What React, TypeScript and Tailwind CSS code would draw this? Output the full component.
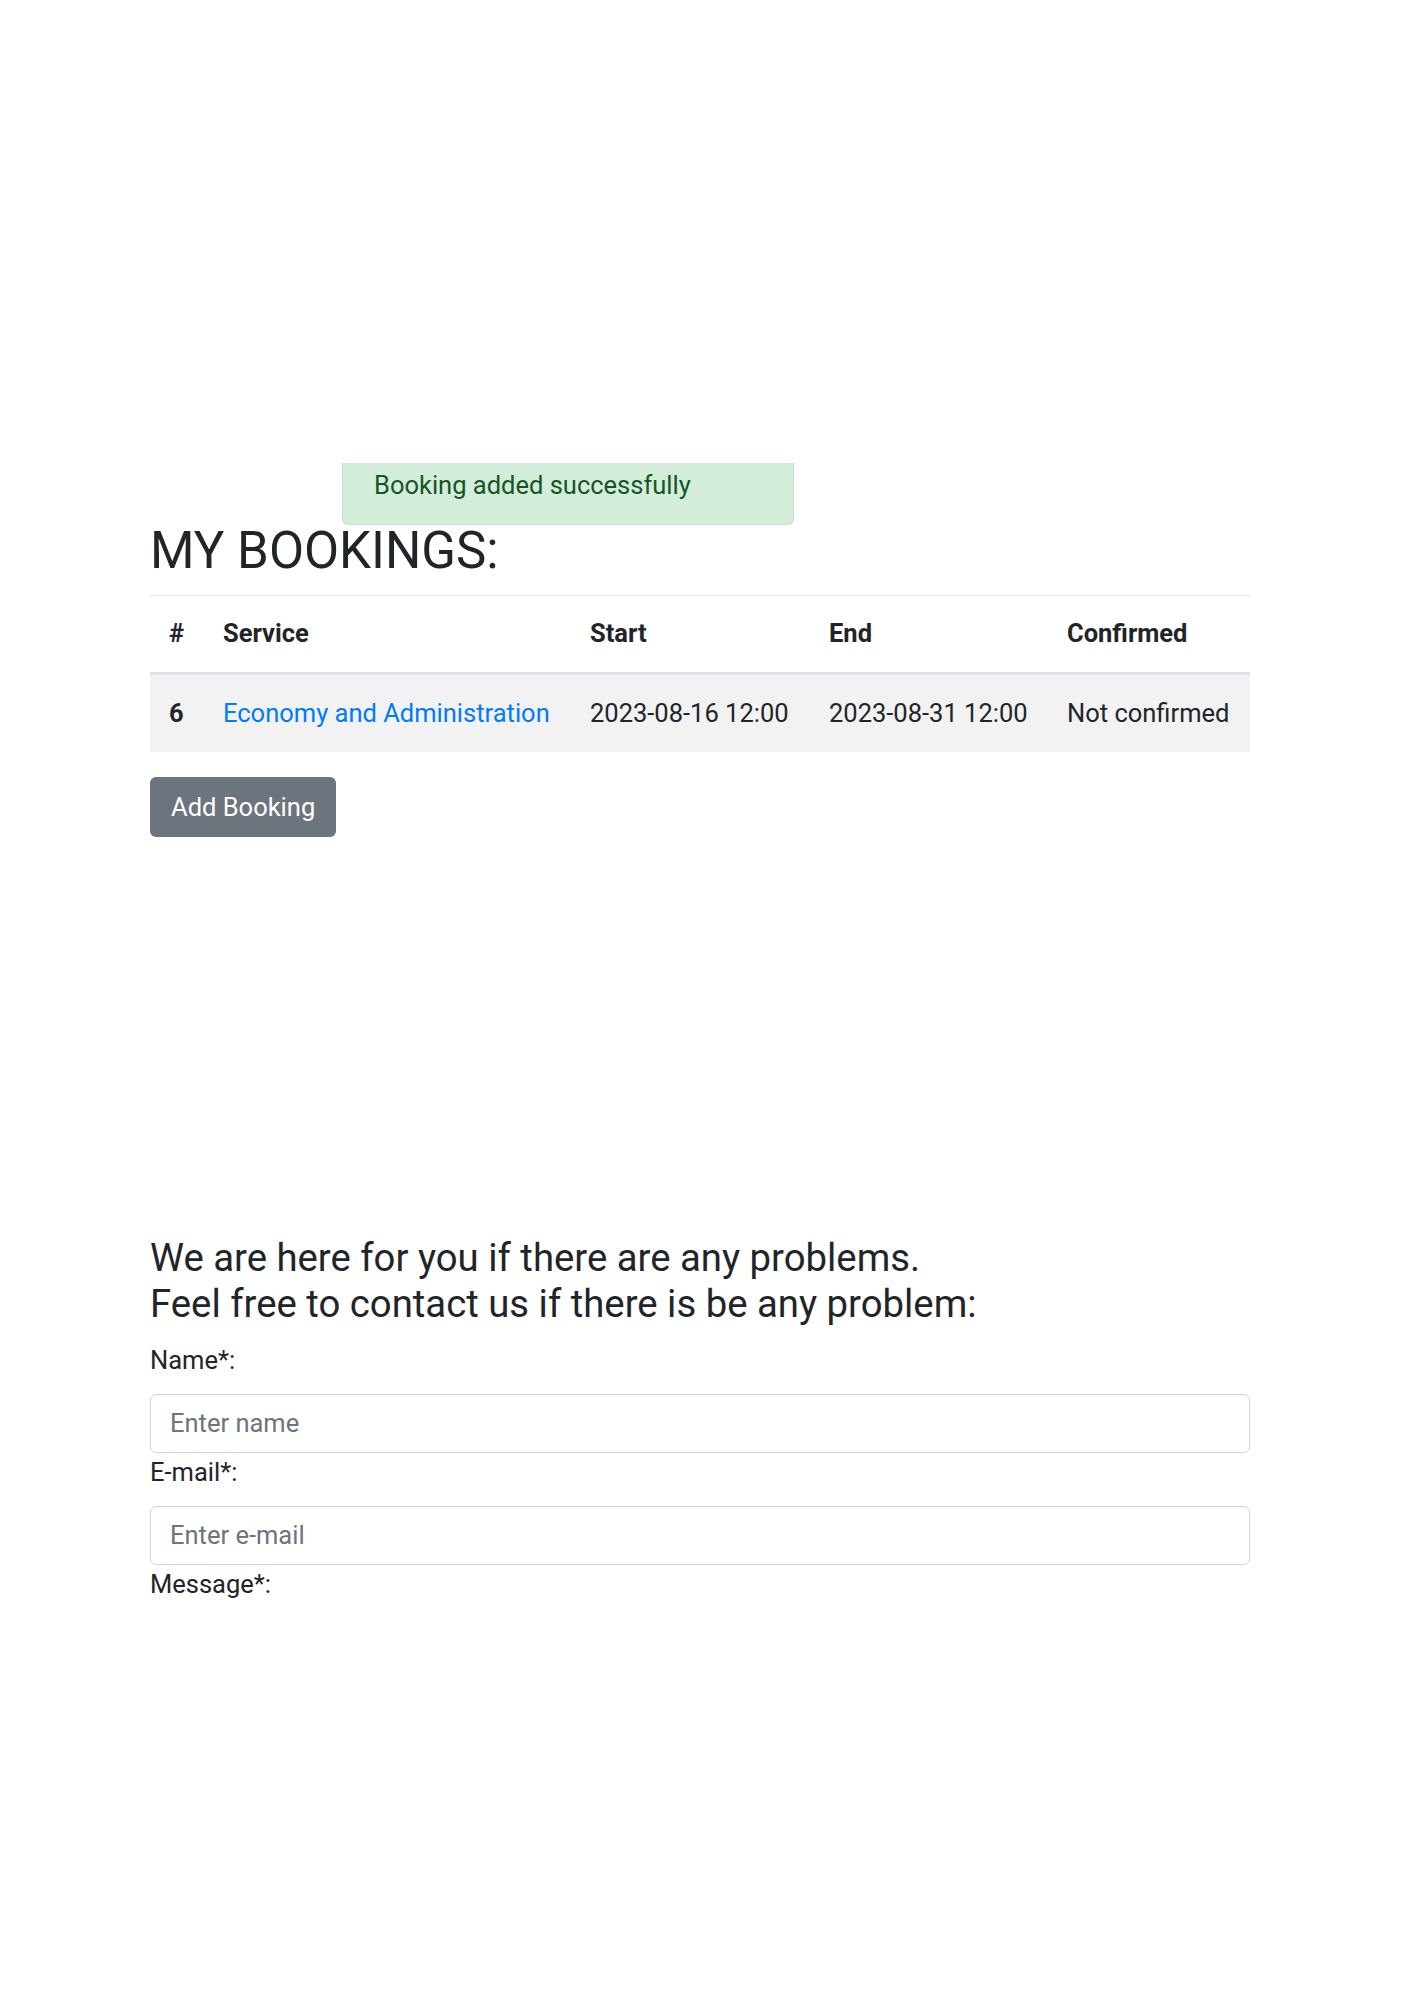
import React from 'react';

const bookings = [
  {
    id: 6,
    service: 'Economy and Administration',
    start: '2023-08-16 12:00',
    end: '2023-08-31 12:00',
    confirmed: 'Not confirmed',
  },
];

export default function App() {
  return <div className="min-h-screen bg-white font-[Roboto,sans-serif] text-[#212529] text-[25.5px]">
      <div className="w-[1100px] ml-[150px] pt-[463px]">
        <div className="ml-[192px] w-[452px] h-[62px] bg-[#d4edda] text-[#155724] border-x border-b border-[#c3e6cb] rounded-b-[6px] pl-[31px] pt-[4px] leading-[37px]">
          Booking added successfully
        </div>
        <h2 className="text-[51px] leading-[52px] font-normal mb-[18px]">MY BOOKINGS:</h2>
        <table className="w-full table-fixed border-collapse">
          <colgroup>
            <col className="w-[54px]" />
            <col className="w-[367px]" />
            <col className="w-[239px]" />
            <col className="w-[238px]" />
            <col className="w-[202px]" />
          </colgroup>
          <thead>
            <tr className="border-t border-[#dee2e6] border-b-[3px]">
              <th className="h-[78px] pl-[19px] pb-[2px] text-left font-bold align-middle">#</th>
              <th className="h-[78px] pl-[19px] pb-[2px] text-left font-bold align-middle">Service</th>
              <th className="h-[78px] pl-[19px] pb-[2px] text-left font-bold align-middle">Start</th>
              <th className="h-[78px] pl-[19px] pb-[2px] text-left font-bold align-middle">End</th>
              <th className="h-[78px] pl-[19px] pb-[2px] text-left font-bold align-middle">Confirmed</th>
            </tr>
          </thead>
          <tbody>
            {bookings.map(b => <tr key={b.id} className="bg-[#f2f2f2]">
                <td className="h-[78px] pl-[19px] font-bold align-middle">{b.id}</td>
                <td className="h-[78px] pl-[19px] align-middle whitespace-nowrap">
                  <a href="#" className="text-[#007bff]">{b.service}</a>
                </td>
                <td className="h-[78px] pl-[19px] align-middle whitespace-nowrap">{b.start}</td>
                <td className="h-[78px] pl-[19px] align-middle whitespace-nowrap">{b.end}</td>
                <td className="h-[78px] pl-[19px] align-middle whitespace-nowrap">{b.confirmed}</td>
              </tr>)}
          </tbody>
        </table>
        <button className="mt-[25px] h-[60px] px-[21px] bg-[#6c757d] text-white rounded-[6px] leading-[38px]">
          Add Booking
        </button>

        <h4 className="mt-[398px] text-[38.3px] leading-[46px] font-normal mb-[14px]">
          We are here for you if there are any problems.
          <br />
          Feel free to contact us if there is be any problem:
        </h4>
        <form>
          <label htmlFor="name" className="block leading-[38px] mb-[15px]">Name*:</label>
          <input id="name" type="text" placeholder="Enter name" className="block w-full h-[59px] px-[19px] border border-[#ced4da] rounded-[6px] placeholder:text-[#6c757d] outline-none" />
          <label htmlFor="email" className="block leading-[38px] mb-[15px]">E-mail*:</label>
          <input id="email" type="email" placeholder="Enter e-mail" className="block w-full h-[59px] px-[19px] border border-[#ced4da] rounded-[6px] placeholder:text-[#6c757d] outline-none" />
          <label htmlFor="message" className="block leading-[38px]">Message*:</label>
        </form>
      </div>
    </div>;
}
